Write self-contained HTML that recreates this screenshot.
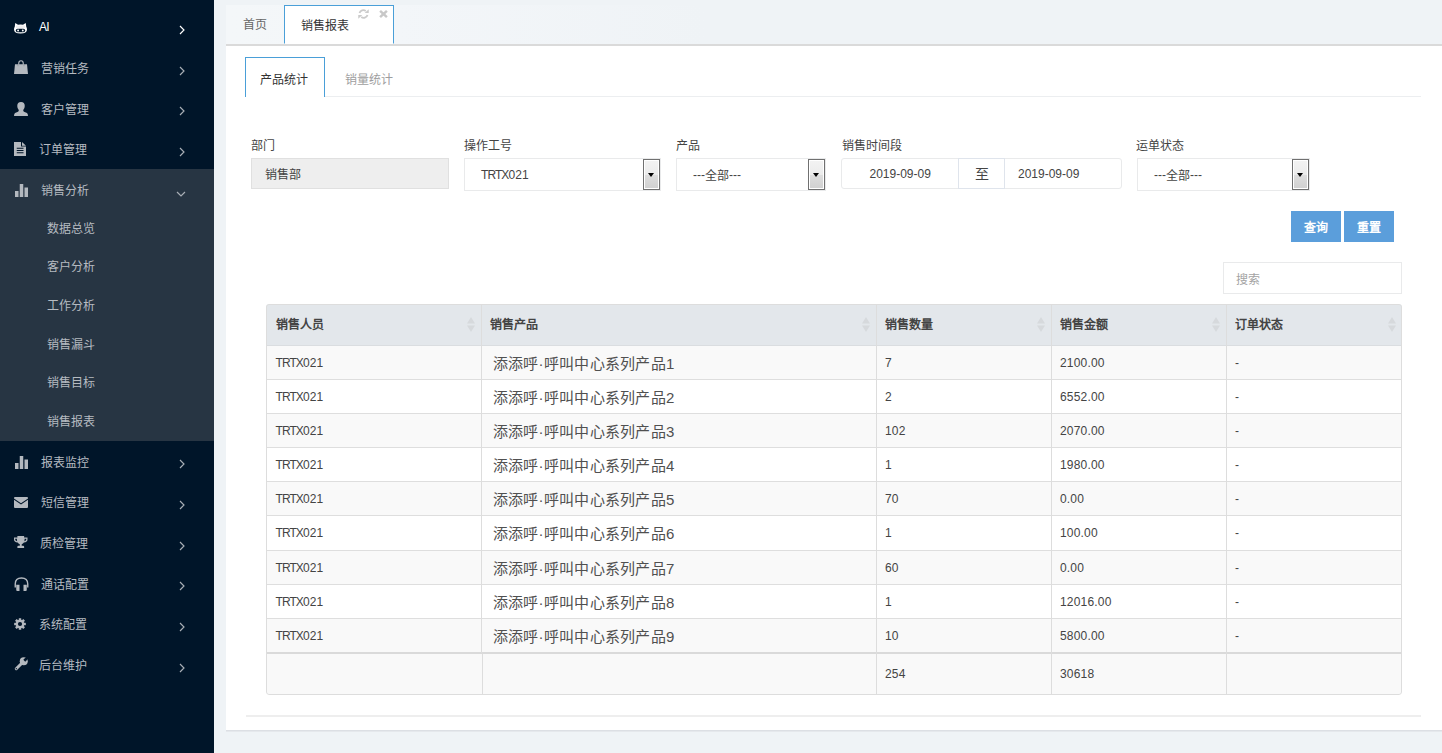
<!DOCTYPE html>
<html lang="zh-CN">
<head>
<meta charset="utf-8">
<title>销售报表</title>
<style>
*{box-sizing:border-box;margin:0;padding:0}
html,body{width:1442px;height:753px;overflow:hidden}
body{font-family:"Liberation Sans",sans-serif;font-size:12px;color:#444;background:#eff3f6;position:relative}
#side{position:absolute;left:0;top:0;width:214px;height:753px;background:#001529}
#side .open{position:absolute;left:0;top:169px;width:214px;height:272px;background:#273543}
#side .t{position:absolute;color:#b6bbc1;font-size:12px;line-height:16px;height:16px;white-space:nowrap}
#side .t.w{color:#fff;letter-spacing:-0.8px}
svg{position:absolute;display:block;overflow:visible}
#tabbar{position:absolute;left:226px;top:5px;width:1216px;height:39px;background:linear-gradient(to right,#f4f7f9 0,#f3f6f9 170px,#eff3f6 480px)}
#tabline{position:absolute;left:226px;top:44px;width:1216px;height:2px;background:#dadada}
#panel{position:absolute;left:226px;top:46px;width:1216px;height:684px;background:#fff}
#panelb{position:absolute;left:226px;top:730px;width:1216px;height:2px;background:linear-gradient(#dcdfe4 50%,#e5e8ec 50%)}
.tab1{position:absolute;left:242.5px;top:17px;font-size:12px;line-height:16px;color:#666}
.tab2{position:absolute;left:284px;top:5px;width:110px;height:39px;background:#fff;border:1px solid #4a9fd8;border-bottom:1px solid #fff}
.tab2 span{position:absolute;left:16px;top:12px;font-size:12px;line-height:16px;color:#333}
.tab2 .rf{left:73.2px;top:3px}
.tab2 .cl{left:94.2px;top:4.2px}
.itab{position:absolute;left:245px;top:57px;width:80px;height:40px;border:1px solid #4a9fd8;border-bottom:0;background:#fff}
.itab span{position:absolute;left:14px;top:14px;font-size:12px;line-height:16px;color:#333}
.itab2{position:absolute;left:345px;top:72px;font-size:12px;line-height:16px;color:#9e9e9e}
.iline{position:absolute;left:325px;top:96px;width:1096px;height:1px;background:#eceef0}
.lbl{position:absolute;top:138px;font-size:12px;line-height:16px;color:#444}
.inp{position:absolute;top:158px;height:33px;border:1px solid #e9eaeb;background:#fff;font-size:12px;line-height:33px;color:#444;padding-left:16px;white-space:nowrap}
.inp.dis{background:#eee;border-color:#e0e0e0;padding-left:13px;height:31px;line-height:33px}
.inp.dt,.inp.to{height:31px;line-height:30px}
.inp.to{font-size:14px;border-color:#dfe4ec;z-index:2}
.inp.k1{letter-spacing:0}
.dd{position:absolute;top:159px;width:17px;height:31px;border:1px solid #707070;border-radius:0;background:linear-gradient(#f3f3f3 0,#ebebeb 50%,#dedede 50%,#d0d0d0 100%);box-shadow:inset 0 0 0 1px #fff}
.dd:after{content:"";position:absolute;left:3.75px;top:12.8px;border:3.75px solid transparent;border-top:4.4px solid #000;border-bottom:0}
.btn{position:absolute;top:211px;width:50px;height:31px;background:#5b9edb;color:#fff;font-size:12px;line-height:35px;text-align:center;font-weight:bold;overflow:hidden}
.search{position:absolute;left:1223px;top:262px;width:179px;height:32px;border:1px solid #e9eaeb;background:#fff;font-size:12px;line-height:34px;color:#a3a3a3;padding-left:12px;overflow:hidden}
#tbl{position:absolute;left:266px;top:304px;width:1136px;height:391px;border-radius:3px;background:#fff;overflow:hidden}
#tbl .bd{position:absolute;left:0;top:0;width:1136px;height:391px;border:1px solid #ddd;border-radius:3px}
#tbl .hd{position:absolute;left:0;top:0;width:1136px;height:42px;background:#e3e7eb;border-bottom:1px solid #dadde0}
#tbl .r{position:absolute;left:0;width:1136px;border-bottom:1px solid #dedede}
#tbl .r.o,#tbl .r.f{background:#f9f9f9}
#tbl .r.f{border-top:2px solid #dadada;border-bottom:0}
#tbl .v{position:absolute;top:0;width:1px;height:391px;background:#ddd}
#tbl .c{position:absolute;font-size:12px;line-height:16px;color:#444;white-space:nowrap}
.k{letter-spacing:-0.93px}
.d{letter-spacing:0.18px}
#tbl .h{position:absolute;top:13px;font-size:12px;line-height:16px;color:#444;font-weight:bold;white-space:nowrap}
#tbl .p{position:absolute;font-size:15px;line-height:18px;color:#505050;font-weight:300;white-space:nowrap;letter-spacing:0.3px}
#tbl .p i{font-style:normal}
#tbl .s{top:13px}
.hr{position:absolute;left:246px;top:715px;width:1175px;height:2px;background:#eee}
.dn{position:relative;top:1px}
</style>
</head>
<body>
<div id="side">
<div class="open"></div>
<svg style="left:14px;top:23.3px" width="13" height="10.8" viewBox="0 0 26 22" preserveAspectRatio="none"><path fill="#fff" d="M2.5 0 L8 3.5 Q13 2.5 18 3.5 L23.5 0 L24.5 7.5 Q26 10 26 13 Q26 21.4 13 21.4 Q0 21.4 0 13 Q0 10 1.5 7.5 Z"/><rect x="4" y="5" width="18" height="5.5" fill="#eeeef0"/><rect x="3.6" y="11.6" width="18.8" height="7" rx="3.5" fill="#001529"/><ellipse cx="8.2" cy="15.1" rx="1.9" ry="2" fill="#fff"/><ellipse cx="17.6" cy="15.1" rx="1.9" ry="2" fill="#fff"/></svg>
<div class="t w" style="left:39px;top:19px">AI</div>
<svg style="left:178px;top:24px" width="8" height="12" viewBox="0 0 8 12"><path fill="none" stroke="#fff" stroke-width="1.15" d="M2 2 L6 6 L2 10"/></svg>
<svg style="left:14px;top:60px" width="14" height="14" viewBox="0 0 28 28" preserveAspectRatio="none"><path fill="#b4b9bf" d="M2 8.5 H26 L28 28 H0 Z"/><path fill="none" stroke="#b4b9bf" stroke-width="2.2" d="M9.5 12 V6.5 Q9.5 1.5 14 1.5 Q18.5 1.5 18.5 6.5 V12"/><path fill="none" stroke="#001529" stroke-width="1" stroke-opacity="0.35" d="M8 8.5 V12.5 M20 8.5 V12.5"/></svg>
<div class="t" style="left:41px;top:61px">营销任务</div>
<svg style="left:178px;top:65px" width="8" height="12" viewBox="0 0 8 12"><path fill="none" stroke="#a9afb6" stroke-width="1.15" d="M2 2 L6 6 L2 10"/></svg>
<svg style="left:14px;top:102px" width="14" height="14" viewBox="0 0 28 28" preserveAspectRatio="none"><path fill="#b4b9bf" d="M14 0 Q21.5 0 21.5 8 Q21.5 13 18.5 16 Q18 18.5 20 19.5 L26 22 Q28 23.5 28 28 H0 Q0 23.5 2 22 L8 19.5 Q10 18.5 9.5 16 Q6.5 13 6.5 8 Q6.5 0 14 0 Z"/></svg>
<div class="t" style="left:41px;top:101.5px">客户管理</div>
<svg style="left:178px;top:105px" width="8" height="12" viewBox="0 0 8 12"><path fill="none" stroke="#a9afb6" stroke-width="1.15" d="M2 2 L6 6 L2 10"/></svg>
<svg style="left:14px;top:142px" width="12" height="14" viewBox="0 0 24 28" preserveAspectRatio="none"><path fill="#b4b9bf" d="M0 0 H14 V9 H24 V28 H0 Z M16 0 L24 7.5 H16 Z"/><path stroke="#001529" stroke-width="2.2" d="M5.5 12.6 H19 M5.5 17 H19 M5.5 21.4 H19"/></svg>
<div class="t" style="left:39px;top:142px">订单管理</div>
<svg style="left:178px;top:146px" width="8" height="12" viewBox="0 0 8 12"><path fill="none" stroke="#a9afb6" stroke-width="1.15" d="M2 2 L6 6 L2 10"/></svg>
<svg style="left:15px;top:184px" width="13" height="13" viewBox="0 0 26 26" preserveAspectRatio="none"><path fill="#b4b9bf" d="M0 14 H7 V26 H0 Z M9.5 0 H16.5 V26 H9.5 Z M19 7 H26 V26 H19 Z"/></svg>
<div class="t" style="left:41px;top:183px">销售分析</div>
<svg style="left:175px;top:190px" width="12" height="8" viewBox="0 0 12 8"><path fill="none" stroke="#a9afb6" stroke-width="1.15" d="M2 2 L6 6 L10 2"/></svg>
<svg style="left:15px;top:456px" width="13" height="13" viewBox="0 0 26 26" preserveAspectRatio="none"><path fill="#b4b9bf" d="M0 14 H7 V26 H0 Z M9.5 0 H16.5 V26 H9.5 Z M19 7 H26 V26 H19 Z"/></svg>
<div class="t" style="left:41px;top:455px">报表监控</div>
<svg style="left:178px;top:458px" width="8" height="12" viewBox="0 0 8 12"><path fill="none" stroke="#a9afb6" stroke-width="1.15" d="M2 2 L6 6 L2 10"/></svg>
<svg style="left:14px;top:497px" width="14" height="11" viewBox="0 0 28 22" preserveAspectRatio="none"><path fill="#b4b9bf" d="M0 2 Q0 0 2 0 H26 Q28 0 28 2 V3 L14 12.5 L0 3 Z M0 5.6 L14 15.2 L28 5.6 V20 Q28 22 26 22 H2 Q0 22 0 20 Z"/></svg>
<div class="t" style="left:41px;top:495px">短信管理</div>
<svg style="left:178px;top:499px" width="8" height="12" viewBox="0 0 8 12"><path fill="none" stroke="#a9afb6" stroke-width="1.15" d="M2 2 L6 6 L2 10"/></svg>
<svg style="left:14px;top:536px" width="13.5" height="12" viewBox="0 0 28 24" preserveAspectRatio="none"><path fill="#b4b9bf" d="M7 0 H21 V3 H28 V7 Q28 12 20.5 13 Q19 15.5 16 16.5 V19.5 H19 Q21 19.5 21 21.5 V24 H7 V21.5 Q7 19.5 9 19.5 H12 V16.5 Q9 15.5 7.5 13 Q0 12 0 7 V3 H7 Z M2.5 5.5 V7 Q2.5 9.5 6.5 10.5 Q6 8 6 5.5 Z M25.5 5.5 H22 Q22 8 21.5 10.5 Q25.5 9.5 25.5 7 Z"/></svg>
<div class="t" style="left:40px;top:536px">质检管理</div>
<svg style="left:178px;top:540px" width="8" height="12" viewBox="0 0 8 12"><path fill="none" stroke="#a9afb6" stroke-width="1.15" d="M2 2 L6 6 L2 10"/></svg>
<svg style="left:13.6px;top:576.8px" width="15" height="14" viewBox="0 0 30 28" preserveAspectRatio="none"><path fill="none" stroke="#b4b9bf" stroke-width="2.8" d="M2.5 21 V14 Q2.5 2 15 2 Q27.5 2 27.5 14 V21"/><path fill="#b4b9bf" d="M4.5 15.5 H11 V28 H6.5 Q4.5 28 4.5 26 Z M19 15.5 H25.5 V26 Q25.5 28 23.5 28 H19 Z"/></svg>
<div class="t" style="left:41px;top:576.5px">通话配置</div>
<svg style="left:178px;top:579.5px" width="8" height="12" viewBox="0 0 8 12"><path fill="none" stroke="#a9afb6" stroke-width="1.15" d="M2 2 L6 6 L2 10"/></svg>
<svg style="left:14px;top:617.8px" width="12" height="12" viewBox="0 0 24 24" preserveAspectRatio="none"><g fill="#b4b9bf"><circle cx="12" cy="12" r="8.5"/><rect x="9.5" y="0.3" width="5" height="23.4" rx="0.8" transform="rotate(0 12 12)"/><rect x="9.5" y="0.3" width="5" height="23.4" rx="0.8" transform="rotate(45 12 12)"/><rect x="9.5" y="0.3" width="5" height="23.4" rx="0.8" transform="rotate(90 12 12)"/><rect x="9.5" y="0.3" width="5" height="23.4" rx="0.8" transform="rotate(135 12 12)"/></g><circle cx="12" cy="12" r="4.2" fill="#001529"/></svg>
<div class="t" style="left:39px;top:617px">系统配置</div>
<svg style="left:178px;top:620.5px" width="8" height="12" viewBox="0 0 8 12"><path fill="none" stroke="#a9afb6" stroke-width="1.15" d="M2 2 L6 6 L2 10"/></svg>
<svg style="left:14px;top:657px" width="14" height="14" viewBox="0 0 28 28" preserveAspectRatio="none"><path stroke="#b4b9bf" stroke-width="6" stroke-linecap="round" d="M4.5 23.5 L17 11"/><circle cx="19.5" cy="8.5" r="8" fill="#b4b9bf"/><rect x="16.8" y="-6" width="5.4" height="13" transform="rotate(45 19.5 8.500)" fill="#001529"/><circle cx="4.6" cy="23.4" r="1.3" fill="#001529"/></svg>
<div class="t" style="left:39px;top:658px">后台维护</div>
<svg style="left:178px;top:661.5px" width="8" height="12" viewBox="0 0 8 12"><path fill="none" stroke="#a9afb6" stroke-width="1.15" d="M2 2 L6 6 L2 10"/></svg>
<div class="t" style="left:47px;top:221px">数据总览</div>
<div class="t" style="left:47px;top:259px">客户分析</div>
<div class="t" style="left:47px;top:298px">工作分析</div>
<div class="t" style="left:47px;top:336.5px">销售漏斗</div>
<div class="t" style="left:47px;top:375px">销售目标</div>
<div class="t" style="left:47px;top:413.5px">销售报表</div>
</div>
<div id="tabbar"></div><div id="tabline"></div><div id="panel"></div><div id="panelb"></div>
<div class="tab1">首页</div>
<div class="tab2"><span>销售报表</span><svg class="rf" width="11" height="10" viewBox="0 0 22 20"><path fill="none" stroke="#cbcbcb" stroke-width="3.6" d="M3 7.85 A7.8 7.8 0 0 1 15.5 4 M19 12.15 A7.8 7.8 0 0 1 6.5 16"/><path fill="#cbcbcb" d="M21.5 0.3 V8 H13.3 Z M0.5 19.7 V12 H8.7 Z"/></svg><svg class="cl" width="9" height="8" viewBox="0 0 18 16"><path stroke="#c8c8c8" stroke-width="5" d="M2.2 1.8 L15.8 14.2 M15.8 1.8 L2.2 14.2"/></svg></div>
<div class="itab"><span>产品统计</span></div><div class="itab2">销量统计</div><div class="iline"></div>
<div class="lbl" style="left:251px">部门</div>
<div class="inp dis" style="left:251px;width:198px">销售部</div>
<div class="lbl" style="left:464px">操作工号</div>
<div class="inp" style="left:464px;width:197px"><span class="k">TRTX</span><span class="d">021</span></div><div class="dd" style="left:643px"></div>
<div class="lbl" style="left:676px">产品</div>
<div class="inp" style="left:676px;width:150px">---<span class="dn">全部</span>---</div><div class="dd" style="left:808px"></div>
<div class="lbl" style="left:842px">销售时间段</div>
<div class="inp dt" style="left:841px;width:118px;padding-left:27.5px;border-radius:3px 0 0 3px">2019-09-09</div>
<div class="inp to" style="left:958px;width:47px;padding-left:0;text-align:center">至</div>
<div class="inp dt" style="left:1004px;width:118px;padding-left:13px;border-radius:0 3px 3px 0">2019-09-09</div>
<div class="lbl" style="left:1136px">运单状态</div>
<div class="inp" style="left:1137px;width:173px">---<span class="dn">全部</span>---</div><div class="dd" style="left:1292px"></div>
<div class="btn" style="left:1291px">查询</div><div class="btn" style="left:1344px">重置</div>
<div class="search">搜索</div>
<div id="tbl">
<div class="hd"></div>
<div class="r o" style="top:42px;height:34px"></div>
<div class="r" style="top:76px;height:34px"></div>
<div class="r o" style="top:110px;height:34px"></div>
<div class="r" style="top:144px;height:34px"></div>
<div class="r o" style="top:178px;height:34px"></div>
<div class="r" style="top:212px;height:35px"></div>
<div class="r o" style="top:247px;height:34px"></div>
<div class="r" style="top:281px;height:34px"></div>
<div class="r o" style="top:315px;height:34px"></div>
<div class="r f" style="top:348px;height:43px"></div>
<div class="v" style="left:215px;height:349px"></div><div class="v" style="left:216px;top:350px;height:41px"></div>
<div class="v" style="left:610px"></div>
<div class="v" style="left:785px"></div>
<div class="v" style="left:960px"></div>
<div class="h" style="left:9.5px">销售人员</div>
<svg class="s" style="left:201px" width="8" height="15" viewBox="0 0 8 15"><path fill="#d6d9dc" d="M4 0 L8 6.5 H0 Z M4 15 L0 8.5 H8 Z"/></svg>
<div class="h" style="left:223.5px">销售产品</div>
<svg class="s" style="left:596px" width="8" height="15" viewBox="0 0 8 15"><path fill="#d6d9dc" d="M4 0 L8 6.5 H0 Z M4 15 L0 8.5 H8 Z"/></svg>
<div class="h" style="left:618.5px">销售数量</div>
<svg class="s" style="left:771px" width="8" height="15" viewBox="0 0 8 15"><path fill="#d6d9dc" d="M4 0 L8 6.5 H0 Z M4 15 L0 8.5 H8 Z"/></svg>
<div class="h" style="left:793.5px">销售金额</div>
<svg class="s" style="left:946px" width="8" height="15" viewBox="0 0 8 15"><path fill="#d6d9dc" d="M4 0 L8 6.5 H0 Z M4 15 L0 8.5 H8 Z"/></svg>
<div class="h" style="left:968.5px">订单状态</div>
<svg class="s" style="left:1122px" width="8" height="15" viewBox="0 0 8 15"><path fill="#d6d9dc" d="M4 0 L8 6.5 H0 Z M4 15 L0 8.5 H8 Z"/></svg>
<div class="c" style="left:9.5px;top:51px"><span class="k">TRTX</span><span class="d">021</span></div>
<div class="p" style="left:226.5px;top:51px">添添呼·呼叫中心系列产品<i>1</i></div>
<div class="c d" style="left:619px;top:51px">7</div>
<div class="c d" style="left:794px;top:51px">2100.00</div>
<div class="c" style="left:969px;top:51px">-</div>
<div class="c" style="left:9.5px;top:85px"><span class="k">TRTX</span><span class="d">021</span></div>
<div class="p" style="left:226.5px;top:85px">添添呼·呼叫中心系列产品<i>2</i></div>
<div class="c d" style="left:619px;top:85px">2</div>
<div class="c d" style="left:794px;top:85px">6552.00</div>
<div class="c" style="left:969px;top:85px">-</div>
<div class="c" style="left:9.5px;top:119px"><span class="k">TRTX</span><span class="d">021</span></div>
<div class="p" style="left:226.5px;top:119px">添添呼·呼叫中心系列产品<i>3</i></div>
<div class="c d" style="left:619px;top:119px">102</div>
<div class="c d" style="left:794px;top:119px">2070.00</div>
<div class="c" style="left:969px;top:119px">-</div>
<div class="c" style="left:9.5px;top:153px"><span class="k">TRTX</span><span class="d">021</span></div>
<div class="p" style="left:226.5px;top:153px">添添呼·呼叫中心系列产品<i>4</i></div>
<div class="c d" style="left:619px;top:153px">1</div>
<div class="c d" style="left:794px;top:153px">1980.00</div>
<div class="c" style="left:969px;top:153px">-</div>
<div class="c" style="left:9.5px;top:187px"><span class="k">TRTX</span><span class="d">021</span></div>
<div class="p" style="left:226.5px;top:187px">添添呼·呼叫中心系列产品<i>5</i></div>
<div class="c d" style="left:619px;top:187px">70</div>
<div class="c d" style="left:794px;top:187px">0.00</div>
<div class="c" style="left:969px;top:187px">-</div>
<div class="c" style="left:9.5px;top:221px"><span class="k">TRTX</span><span class="d">021</span></div>
<div class="p" style="left:226.5px;top:221px">添添呼·呼叫中心系列产品<i>6</i></div>
<div class="c d" style="left:619px;top:221px">1</div>
<div class="c d" style="left:794px;top:221px">100.00</div>
<div class="c" style="left:969px;top:221px">-</div>
<div class="c" style="left:9.5px;top:256px"><span class="k">TRTX</span><span class="d">021</span></div>
<div class="p" style="left:226.5px;top:256px">添添呼·呼叫中心系列产品<i>7</i></div>
<div class="c d" style="left:619px;top:256px">60</div>
<div class="c d" style="left:794px;top:256px">0.00</div>
<div class="c" style="left:969px;top:256px">-</div>
<div class="c" style="left:9.5px;top:290px"><span class="k">TRTX</span><span class="d">021</span></div>
<div class="p" style="left:226.5px;top:290px">添添呼·呼叫中心系列产品<i>8</i></div>
<div class="c d" style="left:619px;top:290px">1</div>
<div class="c d" style="left:794px;top:290px">12016.00</div>
<div class="c" style="left:969px;top:290px">-</div>
<div class="c" style="left:9.5px;top:324px"><span class="k">TRTX</span><span class="d">021</span></div>
<div class="p" style="left:226.5px;top:324px">添添呼·呼叫中心系列产品<i>9</i></div>
<div class="c d" style="left:619px;top:324px">10</div>
<div class="c d" style="left:794px;top:324px">5800.00</div>
<div class="c" style="left:969px;top:324px">-</div>
<div class="c d" style="left:619px;top:362px">254</div>
<div class="c d" style="left:794px;top:362px">30618</div>
<div class="bd"></div>
</div>
<div class="hr"></div>
</body>
</html>
